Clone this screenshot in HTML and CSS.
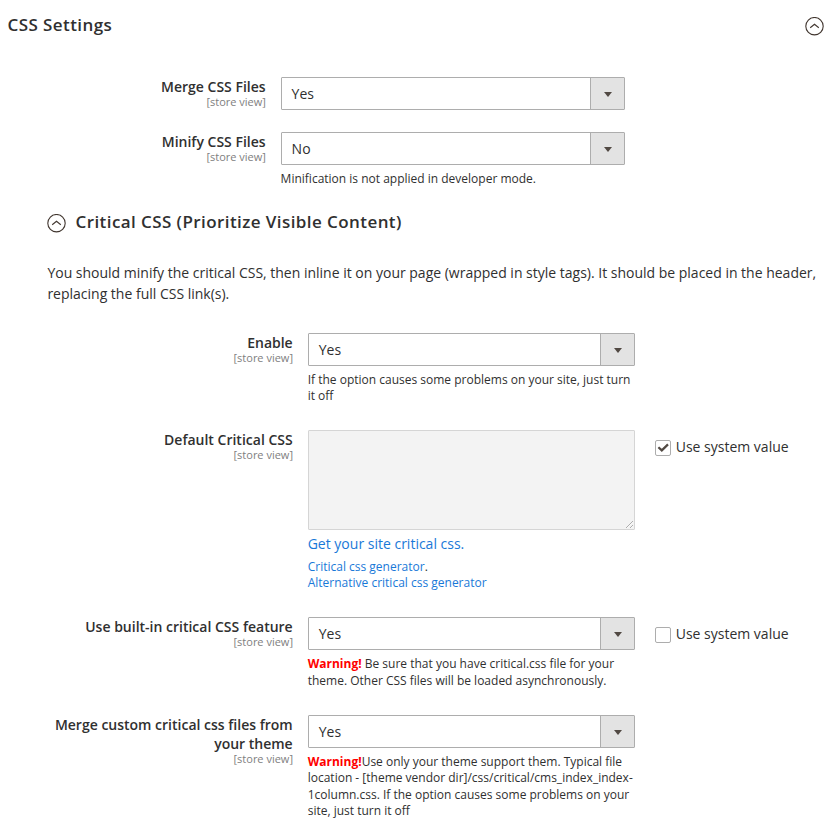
FILE: index.html
```
<!DOCTYPE html>
<html lang="en"><head><meta charset="utf-8"><title>CSS Settings</title><link rel="stylesheet" href="styles.css"></head>
<body>
<header class="section-head"><h1>CSS Settings</h1><svg class="toggle" viewBox="0 0 19 19"><circle cx="9.5" cy="9.2" r="8.7"/><path d="M5.2 10.7 9.5 7.3l4.3 3.4"/></svg></header>
<main>
<div class="row outer merge"><div class="label"><b>Merge CSS Files</b><small>[store view]</small></div><div class="field"><div class="select"><span>Yes</span><i></i></div></div></div>
<div class="row outer minify"><div class="label"><b>Minify CSS Files</b><small>[store view]</small></div><div class="field"><div class="select"><span>No</span><i></i></div><p class="note">Minification is not applied in developer mode.</p></div></div>
<section>
<div class="sub-head"><svg class="toggle" viewBox="0 0 19 19"><circle cx="9.5" cy="9.2" r="8.7"/><path d="M5.2 10.7 9.5 7.3l4.3 3.4"/></svg><h2>Critical CSS (Prioritize Visible Content)</h2></div>
<p class="intro">You should minify the critical CSS, then inline it on your page (wrapped in style tags). It should be placed in the header,<br>replacing the full CSS link(s).</p>
<div class="row enable"><div class="label"><b>Enable</b><small>[store view]</small></div><div class="field"><div class="select"><span>Yes</span><i></i></div><p class="note">If the option causes some problems on your site, just turn<br>it off</p></div></div>
<div class="row default"><div class="label"><b>Default Critical CSS</b><small>[store view]</small></div><div class="field"><textarea disabled></textarea><a class="main-link">Get your site critical css.</a><p class="note links"><a>Critical css generator</a>.<br><a>Alternative critical css generator</a></p></div><div class="system"><span class="box"><svg viewBox="0 0 14 14"><path d="m2.4 6.2 3.4 3.2L12 3.4"/></svg></span>Use system value</div></div>
<div class="row builtin"><div class="label"><b>Use built-in critical CSS feature</b><small>[store view]</small></div><div class="field"><div class="select"><span>Yes</span><i></i></div><p class="note"><strong>Warning!</strong> Be sure that you have critical.css file for your<br>theme. Other CSS files will be loaded asynchronously.</p></div><div class="system"><span class="box"></span>Use system value</div></div>
<div class="row custom"><div class="label"><b>Merge custom critical css files from<br>your theme</b><small>[store view]</small></div><div class="field"><div class="select"><span>Yes</span><i></i></div><p class="note"><strong>Warning!</strong>Use only your theme support them. Typical file<br>location - [theme vendor dir]/css/critical/cms_index_index-<br>1column.css. If the option causes some problems on your<br>site, just turn it off</p></div></div>
</section>
</main>
</body></html>
```
FILE: styles.css
```
* { box-sizing: border-box; }
body { margin: 0; height: 830px; overflow: hidden; background: #fff; color: #303030; font: 14px/19px "Open Sans", sans-serif; }
h1, h2, p { margin: 0; }
h1, h2 { font-size: 17px; line-height: 24px; font-weight: 600; letter-spacing: .42px; }
.section-head { height: 77px; padding: 13px 14px 0 7.5px; display: flex; justify-content: space-between; align-items: flex-start; }
.toggle { width: 19px; height: 19px; fill: none; stroke: #41362f; stroke-width: 1.1; margin-top: 4px; flex: none; }
.row { display: grid; grid-template-columns: 245px 327px 160px; column-gap: 15px; margin-left: 47.7px; }
.row.outer { grid-template-columns: 266px 344px; margin-left: -.4px; }
.merge { height: 55px; }
.minify { height: 78px; }
.label { text-align: right; display: flex; flex-direction: column; }
.label b { font-weight: 600; }
.label small { font-size: 11px; line-height: 12px; color: #808080; position: relative; left: .3px; }
.select { height: 33px; border: 1px solid #adadad; border-radius: 1px; display: flex; }
.select span { flex: 1; padding: 6px 10px; }
.select i { width: 34px; background: #e3e3e3; border-left: 1px solid #adadad; display: flex; align-items: center; justify-content: center; padding: 1px 0 0 1px; }
.select i::before { content: ""; border: 4px solid transparent; border-top: 5px solid #514943; border-bottom: 0; }
.note { font-size: 12px; line-height: 16.4px; padding-top: 6px; white-space: nowrap; }
.builtin .note { padding-top: 6.4px; }
.sub-head { margin-left: 47px; height: 52px; display: flex; gap: 9.5px; }
.intro { margin-left: 47.4px; height: 71px; line-height: 21px; letter-spacing: -.005px; white-space: nowrap; }
.enable { height: 97px; }
.default { height: 187px; }
.builtin { height: 98px; }
textarea { display: block; width: 100%; height: 100px; border: 1px solid #adadad; border-radius: 1px; background: #e9e9e9; opacity: .5; resize: vertical; margin: 0; }
a { color: #1979d8; }
.main-link { display: block; margin-top: 4px; }
.note.links { padding-top: 6px; }
.system { display: flex; align-items: flex-start; gap: 5px; padding: 7px 0 0 5px; white-space: nowrap; }
.box { width: 16px; height: 16px; border: 1px solid #adadad; border-radius: 2px; margin-top: 3px; }
.box svg { display: block; width: 14px; height: 14px; fill: none; stroke: #514943; stroke-width: 2.2; }
strong { color: #f00; font-weight: 700; }
```
